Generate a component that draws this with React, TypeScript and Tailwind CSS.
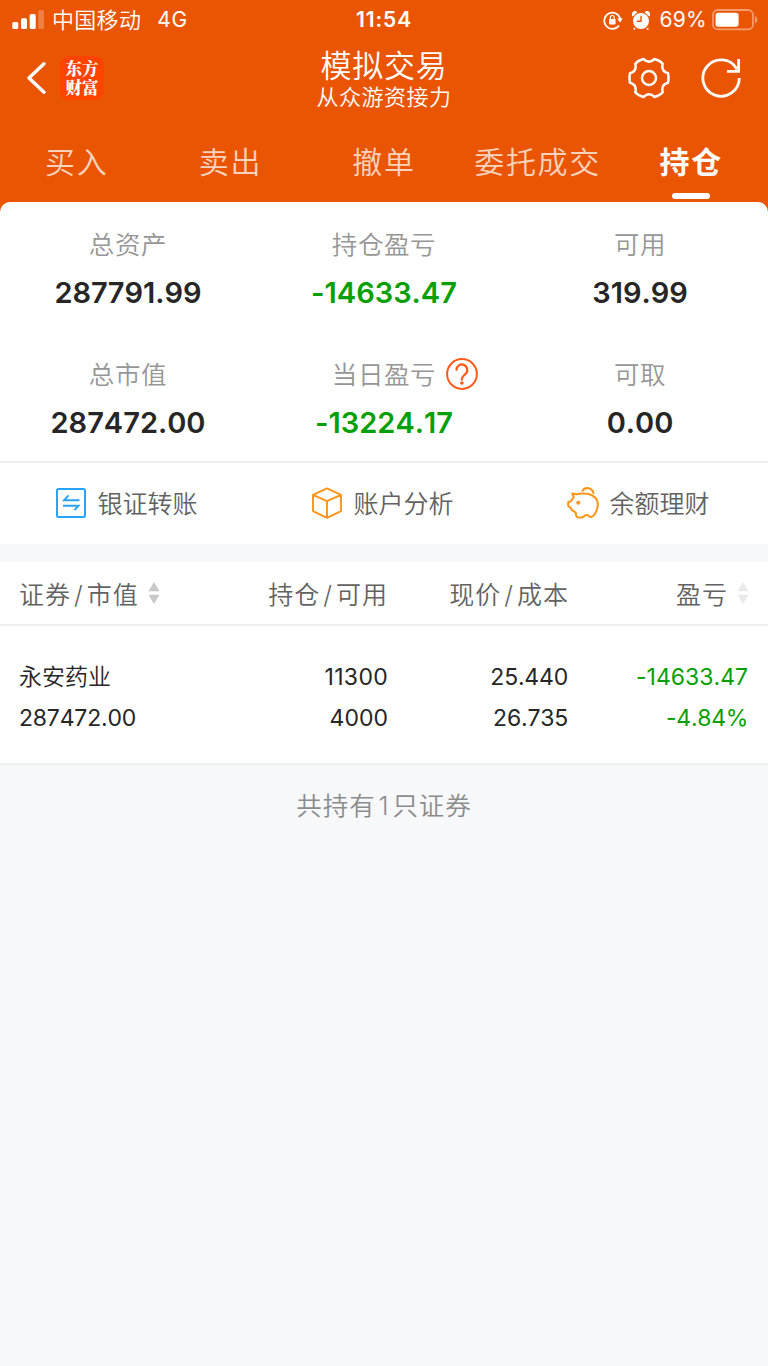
import type { ReactNode } from "react";

const GREEN = "text-[#06a006]";

type Stat = { label: string; value: string; down?: boolean; help?: boolean };

const stats: Stat[] = [
  { label: "总资产", value: "287791.99" },
  { label: "持仓盈亏", value: "-14633.47", down: true },
  { label: "可用", value: "319.99" },
  { label: "总市值", value: "287472.00" },
  { label: "当日盈亏", value: "-13224.17", down: true, help: true },
  { label: "可取", value: "0.00" },
];

const tabs = ["买入", "卖出", "撤单", "委托成交", "持仓"];

function StatusBar() {
  return (
    <div className="grid h-10 grid-cols-3 items-center text-[21px] text-white">
      <div className="flex items-center pl-3">
        <svg width="32" height="20" viewBox="0 0 32 20" fill="currentColor">
          <rect x="0.3" y="12" width="6" height="7" rx="1.6" />
          <rect x="9" y="8.2" width="6" height="10.8" rx="1.6" />
          <rect x="17.7" y="4" width="6" height="15" rx="1.6" />
          <rect x="26.3" y="0" width="5.7" height="19" rx="1.6" opacity="0.25" />
        </svg>
        <span className="ml-2 text-[22px] font-[350] tracking-[0.3px]">中国移动</span>
        <span className="ml-4 tracking-[0.8px]">4G</span>
      </div>
      <div className="text-center text-[21px] font-semibold tracking-[0.9px]">11:54</div>
      <div className="flex items-center justify-end pr-[10px]">
        <svg width="20" height="20" viewBox="0 0 20 20" fill="none" stroke="currentColor" strokeWidth="1.7">
          <path d="M16 15.4A8.1 8.1 0 1 1 17.3 9" />
          <path d="M14.2 8.6h5.6l-2.8 4z" fill="currentColor" stroke="none" />
          <rect x="6" y="9" width="6.6" height="5.4" rx="0.8" fill="currentColor" stroke="none" />
          <path d="M7.4 9V7.4a1.9 1.9 0 0 1 3.8 0V9" strokeWidth="1.2" />
        </svg>
        <svg className="ml-[9px]" width="18" height="19" viewBox="0 0 18 19" fill="currentColor">
          <circle cx="9" cy="10" r="8" />
          <path d="M0.6 5.6A3 3 0 0 1 5.4 1.2zM17.4 5.6A3 3 0 0 0 12.6 1.2zM2 16.4l1.8 1.4-1.6 1.2-1-1zM16 16.4l-1.8 1.4 1.6 1.2 1-1z" />
          <path d="M9 4.8v5.4H4.8" fill="none" stroke="#ea5504" strokeWidth="1.4" />
        </svg>
        <span className="ml-[9px] tracking-[0.3px]">69%</span>
        <svg className="ml-[5px]" width="46" height="22" viewBox="0 0 46 22" fill="none">
          <rect x="1" y="1" width="40" height="19.4" rx="5" stroke="#fff" strokeOpacity="0.42" strokeWidth="1.8" />
          <rect x="3.6" y="3.7" width="23" height="14" rx="2.6" fill="#fff" />
          <path d="M43 7v7.4c1.5-.6 2.3-2 2.3-3.7S44.5 7.6 43 7z" fill="#fff" fillOpacity="0.42" />
        </svg>
      </div>
    </div>
  );
}

function GearIcon() {
  return (
    <svg width="42" height="42" viewBox="0 0 42 42" fill="none" stroke="#fff" strokeWidth="2.5" strokeLinejoin="round">
      <path d="M15.5 2Q21 7.4 26.5 2Q32 3.5 34.7 6.8Q32.8 14.2 40 16.2Q41 21 40 25.8Q32.8 27.8 34.7 35.2Q32 38.5 26.5 40Q21 34.6 15.5 40Q10 38.5 7.3 35.2Q9.2 27.8 2 25.8Q1 21 2 16.2Q9.2 14.2 7.3 6.8Q10 3.5 15.5 2Z" />
      <circle cx="21" cy="21" r="7" />
    </svg>
  );
}

function TitleBar() {
  return (
    <div className="grid h-[82px] grid-cols-3 text-white">
      <div className="flex items-center pb-[6px] pl-[26px]">
        <svg width="20" height="32" viewBox="0 0 20 32" fill="none" stroke="currentColor" strokeWidth="3.4" strokeLinecap="round" strokeLinejoin="round">
          <path d="M18 1.8L3 16l15 14.2" />
        </svg>
        <div className="ml-[14px] h-11 w-11 rounded-[9px] bg-[#ff4400] pt-[3px] text-center font-['Noto_Serif_CJK_SC','Noto_Sans_CJK_SC',serif] text-[16.5px] leading-[19px] font-black">
          东方
          <br />
          财富
        </div>
      </div>
      <div className="flex flex-col items-center pt-[9px]">
        <h1 className="text-[31px] leading-[34px] font-[350] tracking-[0.8px]">模拟交易</h1>
        <p className="text-[22px] leading-[29px] font-[350] tracking-[0.5px]">从众游资接力</p>
      </div>
      <div className="flex items-center justify-end pr-[27px] pb-[6px]">
        <GearIcon />
        <svg className="ml-[31px]" width="40" height="40" viewBox="0 0 40 40" fill="none" stroke="currentColor" strokeWidth="2.8">
          <path d="M38.3 20A18.2 18.2 0 1 1 36 11.2" />
          <path d="M37.6 1v12.4H26" />
        </svg>
      </div>
    </div>
  );
}

function Tabs() {
  return (
    <nav className="grid h-20 grid-cols-5 text-center text-[30px] leading-10 tracking-[1.7px]">
      {tabs.map((tab) =>
        tab === "持仓" ? (
          <div key={tab} className="flex flex-col items-center pt-[20px] font-bold text-white">
            {tab}
            <span className="mt-[11px] h-[6px] w-[38px] rounded-full bg-white" />
          </div>
        ) : (
          <div key={tab} className="pt-[20px] font-[350] text-[#fbd3bd]">
            {tab}
          </div>
        ),
      )}
    </nav>
  );
}

function HelpIcon() {
  return (
    <svg className="ml-[10px]" width="32" height="32" viewBox="0 0 32 32" fill="none" stroke="#ff5a1c" strokeWidth="2">
      <circle cx="16" cy="16" r="14.9" />
      <path d="M10.5 11.8a5.4 5.4 0 1 1 9.4 3.7C18 17.5 15.9 18.5 15.9 21.5" strokeWidth="2.3" strokeLinecap="round" />
      <circle cx="15.9" cy="25" r="1.8" fill="#ff5a1c" stroke="none" />
    </svg>
  );
}

function StatCell({ label, value, down, help }: Stat) {
  return (
    <div className="flex h-[130px] flex-col items-center">
      <div className="flex h-[32px] items-center text-[25.5px] leading-[32px] font-[350] tracking-[0.6px] text-[#969696]">
        <span className={help ? "mt-[2px] ml-[42px]" : "mt-[2px]"}>{label}</span>
        {help && <HelpIcon />}
      </div>
      <div className={["mt-[15px] text-[29px] leading-9 font-semibold", down ? GREEN : "text-[#262626]"].join(" ")}>
        {value}
      </div>
    </div>
  );
}

function Action({ icon, label }: { icon: ReactNode; label: string }) {
  return (
    <div className="flex items-center justify-center pr-[3px] pb-[2px] text-[25px] font-[350] text-[#626262]">
      {icon}
      <span className="mt-[5px] ml-[10px]">{label}</span>
    </div>
  );
}

function TransferIcon() {
  return (
    <svg width="32" height="32" viewBox="0 0 32 32" fill="none" stroke="#27a3fb" strokeWidth="2">
      <rect x="2" y="2" width="28" height="28" rx="1.5" />
      <path d="M24.5 13.3H9l4.5-5M8 18.7h15.5l-4 4.5" strokeWidth="1.9" />
    </svg>
  );
}

function BoxIcon() {
  return (
    <svg width="32" height="32" viewBox="0 0 32 32" fill="none" stroke="#ff9416" strokeWidth="1.9" strokeLinejoin="round">
      <path d="M16 1.4l14 6.5v16.3l-14 6.6-14-6.6V7.9zM2 7.9l14 6.2 14-6.2M16 14.1v16.7" />
    </svg>
  );
}

function PiggyIcon() {
  return (
    <svg width="32" height="32" viewBox="0 0 32 32" fill="none" stroke="#ff9416" strokeWidth="2" strokeLinecap="round" strokeLinejoin="round">
      <path d="M5.3 6.5L9.5 7.2C14 6.3 18 6.3 21.5 7C27.5 8.6 30.8 12 30.8 17C30.8 21.5 29.5 25 27 28.2C25 30.6 22.6 30.6 21.6 28.6C20.5 27.9 18.7 27.9 17.6 28.6C16.8 31 10.5 31.2 9.3 29.2L8.7 25.6L5 23.2L3.6 20.6L1.2 19V15.2L4 14.1L6.8 10Z" />
      <path d="M15.5 3.8C18 -0.3 25 0.3 26.5 6" />
      <circle cx="11.3" cy="15.7" r="2" fill="#ff9416" stroke="none" />
    </svg>
  );
}

function SortIcon({ color }: { color: string }) {
  return (
    <svg className="ml-[9px]" width="12" height="22" viewBox="0 0 12 22" fill={color}>
      <path d="M6 0l5.5 9.3H.5zM6 22l5.5-9.3H.5z" />
    </svg>
  );
}

function Slash() {
  return <span className="px-[3px] font-light">/</span>;
}

function Holdings() {
  return (
    <section className="bg-white">
      <div className="flex h-16 items-center border-b-2 border-[#eee] pr-5 pl-[19px] text-[25px] font-[350] tracking-[1px] text-[#626262]">
        <div className="flex w-[181px] items-center">
          <span className="pt-[5px]">证券<Slash />市值</span>
          <SortIcon color="#c8c8c8" />
        </div>
        <div className="w-[188px] pt-[5px] text-right">持仓<Slash />可用</div>
        <div className="w-[181px] pt-[5px] text-right">现价<Slash />成本</div>
        <div className="-mr-px flex flex-1 items-center justify-end">
          <span className="pt-[5px]">盈亏</span>
          <SortIcon color="#e9e9e9" />
        </div>
      </div>
      <div className="flex h-[139px] border-b-2 border-[#eff2f3] pr-5 pl-[19px] pt-[31px] text-[23px] leading-[41px] text-[#262626]">
        <div className="w-[181px]">
          <div className="font-[350]">永安药业</div>
          <div className="tracking-[-0.2px]">287472.00</div>
        </div>
        <div className="w-[188px] text-right">
          <div className="tracking-[0.3px]">11300</div>
          <div>4000</div>
        </div>
        <div className="w-[180px] text-right tracking-[-0.2px]">
          <div>25.440</div>
          <div>26.735</div>
        </div>
        <div className={["flex-1 text-right", GREEN].join(" ")}>
          <div>-14633.47</div>
          <div className="tracking-[-0.3px]">-4.84%</div>
        </div>
      </div>
    </section>
  );
}

export default function App() {
  return (
    <div className="min-h-[1366px] w-[768px] bg-[#f7f8fa] font-['Inter','Noto_Sans_CJK_SC',sans-serif] [font-feature-settings:'calt'_0] [font-kerning:none]">
      <header className="bg-[#ea5504]">
        <StatusBar />
        <TitleBar />
        <Tabs />
        <section className="rounded-t-[10px] bg-white">
          <div className="grid h-[261px] grid-cols-3 border-b-2 border-[#eee] pt-[26px]">
            {stats.map((stat) => (
              <StatCell key={stat.label} {...stat} />
            ))}
          </div>
        </section>
      </header>
      <div className="grid h-[81px] grid-cols-3 bg-white">
        <Action icon={<TransferIcon />} label="银证转账" />
        <Action icon={<BoxIcon />} label="账户分析" />
        <Action icon={<PiggyIcon />} label="余额理财" />
      </div>
      <div className="h-[18px]" />
      <Holdings />
      <p className="pt-[22px] text-center text-[25.5px] leading-[38px] font-[350] tracking-[0.9px] text-[#8c8c8c]">
        共持有<span className="px-[3px]">1</span>只证券
      </p>
    </div>
  );
}
